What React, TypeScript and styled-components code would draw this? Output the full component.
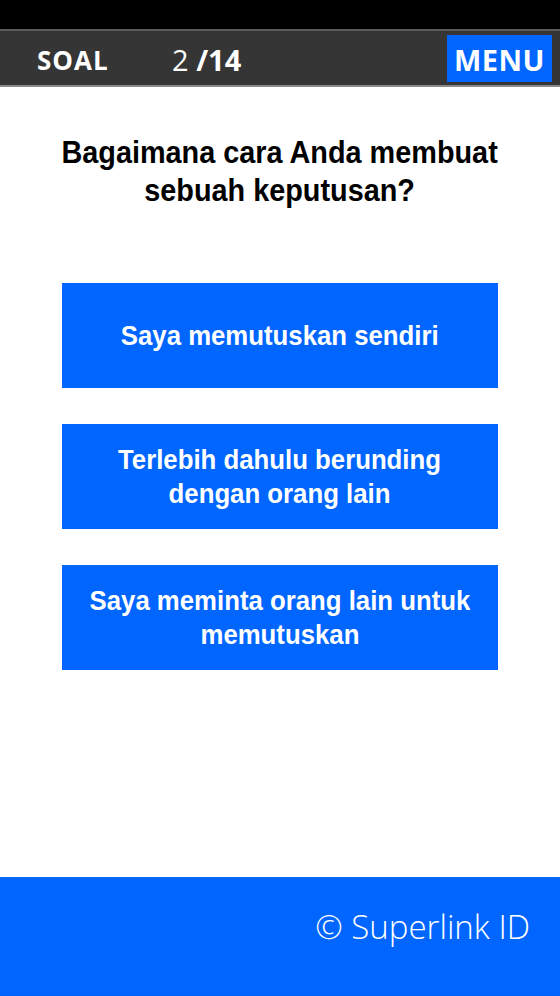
import React from "react";
import styled, { createGlobalStyle } from "styled-components";

const Global = createGlobalStyle`
  html, body { margin: 0; padding: 0; background: #fff; }
  #root { min-height: 996px; }
`;

const Page = styled.div`
  width: 560px;
  height: 996px;
  display: flex;
  flex-direction: column;
  background: #fff;
`;

const StatusBar = styled.div`
  height: 29px;
  background: #000;
  flex-shrink: 0;
`;

const Header = styled.header`
  height: 54px;
  background: #353535;
  border-top: 2px solid #5a5a5a;
  border-bottom: 2px solid #8a8a8a;
  display: flex;
  align-items: center;
  padding: 0 8px 0 37px;
  flex-shrink: 0;
  font-family: "Open Sans", "Noto Sans", sans-serif;
  color: #fff;
`;

const Label = styled.span`
  font-weight: 700;
  font-size: 26px;
  line-height: 1;
  letter-spacing: 1px;
  width: 135px;
  padding-top: 3px;
`;

const Counter = styled.span`
  font-size: 29px;
  line-height: 1;
  font-weight: 400;
  flex: 1;
  padding-top: 3px;
  b { font-weight: 700; }
`;

const MenuButton = styled.button`
  background: #0066ff;
  border: none;
  color: #fff;
  font-family: "Open Sans", "Noto Sans", sans-serif;
  font-weight: 700;
  font-size: 29px;
  height: 47px;
  width: 105px;
  padding: 3px 0 0;
  letter-spacing: 0.5px;
`;

const Main = styled.main`
  flex: 1;
  display: flex;
  flex-direction: column;
  align-items: center;
  padding-top: 47px;
`;

const Question = styled.h1`
  margin: 0 0 73px;
  font-family: "Liberation Sans", Arial, sans-serif;
  font-weight: 700;
  font-size: 31px;
  line-height: 38px;
  text-align: center;
  color: #000;
  white-space: nowrap;
  transform: scaleX(0.93);
`;

const Options = styled.div`
  display: flex;
  flex-direction: column;
  gap: 36px;
  width: 436px;
`;

const Option = styled.button`
  height: 105px;
  background: #0066ff;
  border: none;
  color: #fff;
  font-family: "Liberation Sans", Arial, sans-serif;
  font-weight: 700;
  font-size: 28px;
  line-height: 34px;
  padding: 0;
  display: flex;
  align-items: center;
  justify-content: center;
  text-align: center;
  white-space: nowrap;
  cursor: pointer;
  span { display: inline-block; transform: scaleX(0.92); }
`;

const Footer = styled.footer`
  height: 119px;
  background: #0066ff;
  flex-shrink: 0;
  display: flex;
  justify-content: flex-end;
  padding: 28px 30px 0 0;
  box-sizing: border-box;
  color: #fff;
  font-family: "Open Sans", "Noto Sans", sans-serif;
  font-weight: 300;
  font-size: 33px;
  line-height: 44px;
`;

export default function App() {
  const options = [
    ["Saya memutuskan sendiri"],
    ["Terlebih dahulu berunding", "dengan orang lain"],
    ["Saya meminta orang lain untuk", "memutuskan"],
  ];
  return (
    <>
      <Global />
      <Page>
        <StatusBar />
        <Header>
          <Label>SOAL</Label>
          <Counter>
            2 <b>/14</b>
          </Counter>
          <MenuButton>MENU</MenuButton>
        </Header>
        <Main>
          <Question>
            Bagaimana cara Anda membuat
            <br />
            sebuah keputusan?
          </Question>
          <Options>
            {options.map((lines, i) => (
              <Option key={i}>
                <span>
                  {lines.map((l, j) => (
                    <React.Fragment key={j}>
                      {j > 0 && <br />}
                      {l}
                    </React.Fragment>
                  ))}
                </span>
              </Option>
            ))}
          </Options>
        </Main>
        <Footer>© Superlink ID</Footer>
      </Page>
    </>
  );
}
